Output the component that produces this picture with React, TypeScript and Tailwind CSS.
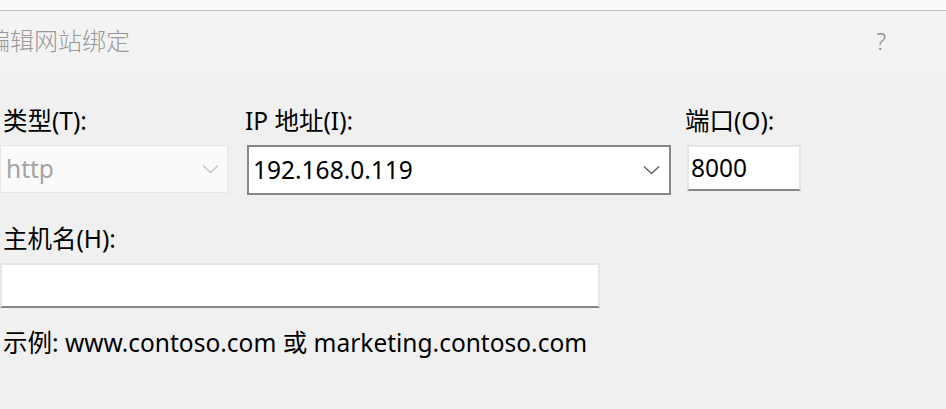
import { ReactNode } from "react";

const font = {
  fontFamily: '"Noto Sans", "Noto Sans CJK SC", sans-serif',
};

function Chevron({ color }: { color: string }) {
  return (
    <svg width="17" height="10" viewBox="0 0 17 10" fill="none">
      <path d="M1 1.5 L8.5 8.5 L16 1.5" stroke={color} strokeWidth="1.3" />
    </svg>
  );
}

function Field({
  label,
  labelPad,
  children,
}: {
  label: string;
  labelPad: string;
  children: ReactNode;
}) {
  return (
    <div className="flex flex-col">
      <div className={`h-[34px] leading-[34px] text-black ${labelPad}`}>{label}</div>
      <div className="mt-[8px]">{children}</div>
    </div>
  );
}

export default function App() {
  return (
    <div
      className="relative h-[409px] w-[946px] overflow-hidden bg-[#f0f0f0] text-[24.5px]"
      style={font}
    >
      <div className="h-[10px] bg-[#f9f9f9]" />
      <div className="h-px bg-[#c2c2c2]" />
      <div className="flex h-[60px] items-center justify-between bg-[#f3f3f3] pr-[60px]">
        <span className="-ml-[14px] text-[24px] font-light text-[#999999]">
          编辑网站绑定
        </span>
        <span className="text-[23px] font-light text-[#8c8c8c]">?</span>
      </div>

      <div className="pt-[33px]">
        <div className="flex items-start">
          <Field label="类型(T):" labelPad="pl-[3px]">
            <div className="-mt-px flex h-[48px] w-[228px] items-center justify-between border border-[#e6e6e6] bg-[#fafafa] pl-[5px] pr-[8px]">
              <span className="text-[#a3a3a3]">http</span>
              <Chevron color="#c6c6c6" />
            </div>
          </Field>
          <div className="ml-[19px]">
            <Field label="IP 地址(I):" labelPad="-ml-[2px]">
              <div className="-mt-[1px] flex h-[50px] w-[424px] items-center justify-between border-2 border-[#878787] bg-white pl-[4px] pr-[9px]">
                <span className="text-black">192.168.0.119</span>
                <Chevron color="#5f5f5f" />
              </div>
            </Field>
          </div>
          <div className="ml-[16px]">
            <Field label="端口(O):" labelPad="-ml-[2px]">
              <div className="-mt-[1px] flex h-[46px] w-[114px] items-center border-x-2 border-t-2 border-b-2 border-x-[#e6e6e6] border-t-[#e6e6e6] border-b-[#888888] bg-white pl-[2px]">
                <span className="text-black">8000</span>
              </div>
            </Field>
          </div>
        </div>

        <div className="mt-[27px] h-[34px] pl-[3px] leading-[34px] text-black">
          主机名(H):
        </div>
        <div className="mt-[7px] h-[45px] w-[600px] border-x-2 border-t-2 border-b-2 border-x-[#e6e6e6] border-t-[#e6e6e6] border-b-[#888888] bg-white" />

        <div className="mt-[18px] h-[34px] pl-[3px] leading-[34px] text-black">
          示例: www.contoso.com 或 marketing.contoso.com
        </div>
      </div>
    </div>
  );
}
